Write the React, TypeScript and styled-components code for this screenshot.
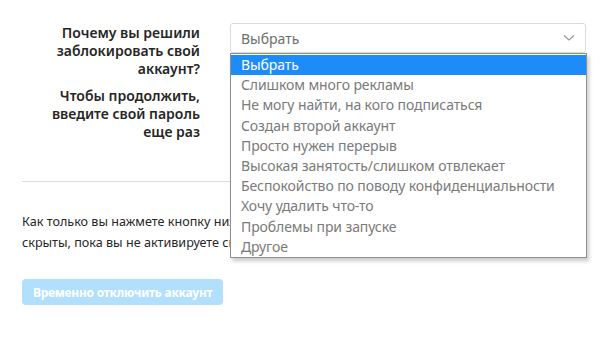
import React from 'react'
import { styled, createGlobalStyle } from 'styled-components';

const GlobalStyle = createGlobalStyle`
	body {
		margin: 0;
		background: #ffffff;
		font-family: "Noto Sans", "Open Sans", sans-serif;
		color: #262626;
	}
`

const reasons = [
	'Выбрать',
	'Слишком много рекламы',
	'Не могу найти, на кого подписаться',
	'Создан второй аккаунт',
	'Просто нужен перерыв',
	'Высокая занятость/слишком отвлекает',
	'Беспокойство по поводу конфиденциальности',
	'Хочу удалить что-то',
	'Проблемы при запуске',
	'Другое',
];

const Page = styled.div`
	width: 564px;
	padding: 23px 0 0 22px;
`
const Row = styled.div`
	display: grid;
	grid-template-columns: 178px 1fr;
	column-gap: 30px;
	align-items: start;
	margin-bottom: 8px;
`
const Label = styled.label`
	padding-top: 1px;
	text-align: right;
	font-size: 14px;
	font-weight: 600;
	line-height: 18px;
	color: #262626;
`
const SelectWrap = styled.div`
	position: relative;
`
const SelectBox = styled.div`
	height: 30px;
	box-sizing: border-box;
	border: 1px solid #dbdbdb;
	border-radius: 3px;
	padding: 0 10px;
	display: flex;
	align-items: center;
	justify-content: space-between;
	font-size: 14px;
	color: #6e6e6e;
`
const Menu = styled.ul`
	position: absolute;
	top: 100%;
	left: 0;
	width: calc(100% + 1px);
	box-sizing: border-box;
	margin: 0;
	padding: 1px 0 0;
	list-style: none;
	background: #ffffff;
	border: 1px solid #8f8f8f;
	box-shadow: 2px 3px 4px rgba(0, 0, 0, 0.22);
	z-index: 2;
`
const Option = styled.li<{ $selected: boolean }>`
	height: 20.2px;
	line-height: 20px;
	padding-left: 10px;
	font-size: 14px;
	letter-spacing: -0.1px;
	white-space: nowrap;
	background: ${({ $selected }) => $selected ? '#1e8cf8' : 'transparent'};
	color: ${({ $selected }) => $selected ? '#ffffff' : '#7a7a7a'};
`
const Input = styled.input`
	width: 100%;
	height: 30px;
	box-sizing: border-box;
	border: 1px solid #dbdbdb;
	border-radius: 3px;
	background: #fafafa;
`
const Divider = styled.hr`
	border: none;
	border-top: 1px solid #dbdbdb;
	margin: 40px 0 0;
`
const Text = styled.p`
	margin: 29px 0 0;
	font-size: 12.6px;
	line-height: 21px;
	white-space: nowrap;
	color: #262626;
`
const Button = styled.button`
	margin-top: 26px;
	height: 26px;
	padding: 0 11px;
	border: none;
	border-radius: 4px;
	background: #b2dffc;
	color: #ffffff;
	font-family: inherit;
	font-size: 12px;
	font-weight: 700;
	letter-spacing: -0.25px;
`

const Chevron = () => (
	<svg width="12" height="8" viewBox="0 0 12 8">
		<path d="M1 1.5 L6 6 L11 1.5" fill="none" stroke="#9a9a9a" strokeWidth="1.2" />
	</svg>
)

const App = () => {
	return (
		<>
			<GlobalStyle />
			<Page>
				<Row>
					<Label>Почему вы решили заблокировать свой аккаунт?</Label>
					<SelectWrap>
						<SelectBox>
							<span>Выбрать</span>
							<Chevron />
						</SelectBox>
						<Menu>
							{reasons.map((r, i) => (
								<Option key={r} $selected={i === 0}>{r}</Option>
							))}
						</Menu>
					</SelectWrap>
				</Row>
				<Row>
					<Label>Чтобы продолжить, введите свой пароль еще раз</Label>
					<Input type="password" />
				</Row>
				<Divider />
				<Text>
					Как только вы нажмете кнопку ниже, ваши фото и комментарии будут
					<br />
					скрыты, пока вы не активируете свой аккаунт, снова выполнив вход.
				</Text>
				<Button disabled>Временно отключить аккаунт</Button>
			</Page>
		</>
	);
};

export default App
